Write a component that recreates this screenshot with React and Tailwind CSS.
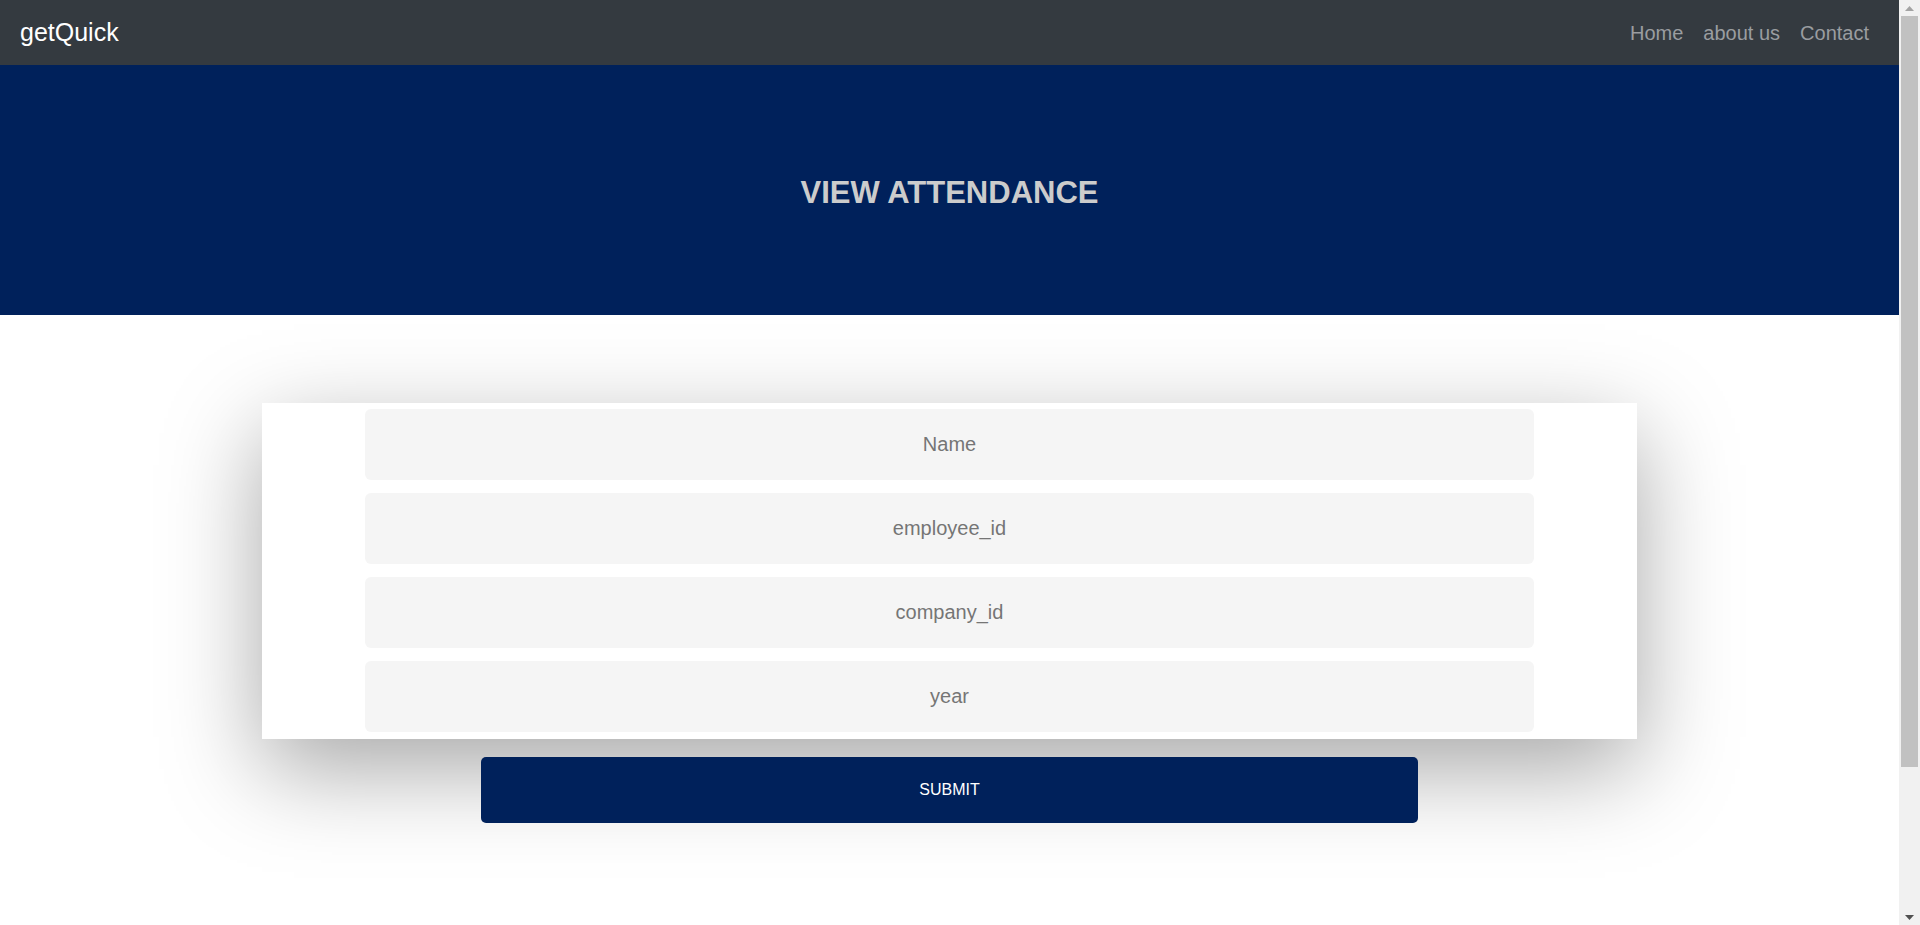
import React, { useState } from 'react';

const fields = ['Name', 'employee_id', 'company_id', 'year'];

const Navbar = () => (
  <nav className="h-[65px] bg-[#343a40] flex items-center justify-between pl-[20px] pr-[20px]">
    <a href="#" className="text-white text-[25px] leading-none">getQuick</a>
    <div className="flex items-center">
      <a href="#" className="px-[10px] text-[20px] text-[#9a9da0]">Home</a>
      <a href="#" className="px-[10px] text-[20px] text-[#9a9da0]">about us</a>
      <a href="#" className="px-[10px] text-[20px] text-[#9a9da0]">Contact</a>
    </div>
  </nav>
);

// window scrollbar as it shows in the screenshot
const ScrollRail = () => (
  <aside className="w-[21px] shrink-0 bg-[#f1f1f1] flex flex-col">
    <div className="h-[16px] flex items-center justify-center">
      <svg width="9" height="5" viewBox="0 0 9 5"><path d="M0 5 L4.5 0 L9 5 Z" fill="#a3a3a3" /></svg>
    </div>
    <div className="flex-1 px-[2px]">
      <div className="h-[751px] bg-[#c1c1c1]" />
    </div>
    <div className="h-[16px] flex items-center justify-center">
      <svg width="9" height="5" viewBox="0 0 9 5"><path d="M0 0 L9 0 L4.5 5 Z" fill="#505050" /></svg>
    </div>
  </aside>
);

const App = () => {
  const [form, setForm] = useState({ Name: '', employee_id: '', company_id: '', year: '' });

  const handleChange = (e) => {
    const { name, value } = e.target;
    setForm(prev => ({ ...prev, [name]: value }));
  };

  return (
    <div className="flex h-screen font-['Liberation_Sans',Arial,sans-serif]">
      <main className="flex-1 overflow-y-auto bg-white">
        <Navbar />
        <div className="h-[250px] bg-[#00215b] flex items-center justify-center">
          <h2 className="text-[31px] font-bold text-[#cccccc] pt-[6px]">VIEW ATTENDANCE</h2>
        </div>
        <div className="pt-[88px] pb-[274px]">
          <form onSubmit={(e) => e.preventDefault()}>
            <div className="w-[1375px] mx-auto bg-white pt-[6px] pb-[7px] flex flex-col items-center gap-[13px] shadow-[0_30px_90px_rgba(0,0,0,0.35)]">
              {fields.map((f) => (
                <input
                  key={f}
                  name={f}
                  value={form[f]}
                  onChange={handleChange}
                  placeholder={f}
                  className="w-[85%] h-[71px] rounded-[6px] bg-[#f5f5f5] text-center text-[20px] text-[#333] placeholder:text-[#757575] outline-none"
                />
              ))}
            </div>
            <div className="flex justify-center mt-[18px]">
              <button
                type="submit"
                className="w-[937px] h-[66px] rounded-[5px] bg-[#00215b] text-white text-[16px]"
              >
                SUBMIT
              </button>
            </div>
          </form>
        </div>
      </main>
      <ScrollRail />
    </div>
  );
};

export default App;
